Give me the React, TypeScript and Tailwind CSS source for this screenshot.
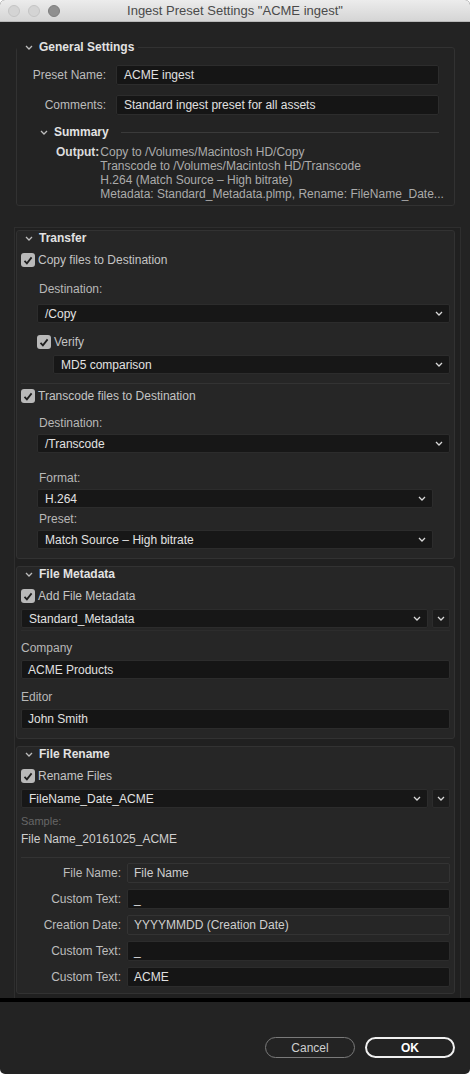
import React from 'react';

const Chevron = ({ className = '' }: { className?: string }) => (
  <svg width="8" height="5" viewBox="0 0 8 5" className={className}>
    <path d="M1 1l3 3 3-3" stroke="currentColor" strokeWidth="1.3" fill="none" />
  </svg>
);

const Check = () => (
  <span className="flex h-[14px] w-[14px] shrink-0 items-center justify-center rounded-[3px] bg-[#b9b9b9]">
    <svg width="10" height="9" viewBox="0 0 10 9">
      <path d="M1.5 4.8l2.4 2.5L8.6 1.4" stroke="#1e1e1e" strokeWidth="1.8" fill="none" />
    </svg>
  </span>
);

const CheckRow = ({ label, className = '' }: { label: string; className?: string }) => (
  <div className={`flex h-[14px] items-center gap-[3px] text-[12px] text-[#c4c4c4] ${className}`}>
    <Check />
    <span>{label}</span>
  </div>
);

const Select = ({ value, className = '' }: { value: string; className?: string }) => (
  <div
    className={`flex h-[19px] items-center justify-between rounded-[2px] border border-[#2c2c2c] bg-[#171717] pl-[7px] pr-[6px] text-[12px] text-[#e2e2e2] ${className}`}
  >
    <span>{value}</span>
    <Chevron className="text-[#d8d8d8]" />
  </div>
);

const MenuButton = () => (
  <div className="flex h-[19px] w-[18px] shrink-0 items-center justify-center rounded-[2px] border border-[#2c2c2c] bg-[#1c1c1c]">
    <Chevron className="text-[#d8d8d8]" />
  </div>
);

const Field = ({ value, className = '', dim = false }: { value: string; className?: string; dim?: boolean }) => (
  <div
    className={`flex items-center rounded-[2px] border px-[6px] text-[12px] ${
      dim ? 'border-[#333] bg-[#262626] text-[#cfcfcf]' : 'border-[#2c2c2c] bg-[#151515] text-[#e0e0e0]'
    } ${className}`}
  >
    {value}
  </div>
);

const Heading = ({ title }: { title: string }) => (
  <div className="flex h-[14px] items-center gap-[6px] pl-[8px] text-[12px] font-bold text-[#e2e2e2]">
    <Chevron className="text-[#bdbdbd]" />
    <span>{title}</span>
  </div>
);

const Label = ({ text, className = '' }: { text: string; className?: string }) => (
  <div className={`h-[14px] text-[12px] leading-[14px] text-[#b8b8b8] ${className}`}>{text}</div>
);

const Section = ({ children }: { children: React.ReactNode }) => (
  <div className="ml-[1px] w-[439px] rounded-[3px] border border-[#323232] bg-[#262626]">{children}</div>
);

const RenameRow = ({ label, value, dim }: { label: string; value: string; dim?: boolean }) => (
  <div className="flex h-[20px] items-center">
    <div className="w-[110px] pr-[6px] text-right text-[12px] text-[#bdbdbd]">{label}</div>
    <Field value={value} dim={dim} className="h-[20px] flex-1" />
  </div>
);

export default function App() {
  return (
    <div className="h-[1074px] w-[470px] bg-white font-['Liberation_Sans',Arial,sans-serif]">
      <div className="flex h-full flex-col overflow-hidden rounded-[5px] bg-[#232323]">
        {/* title bar */}
        <div className="relative flex h-[22px] shrink-0 items-center justify-center border-b border-[#b8b8b8] bg-gradient-to-b from-[#ececec] to-[#d5d5d5]">
          <div className="absolute left-[8px] top-[5px] flex gap-[8px]">
            <span className="h-[12px] w-[12px] rounded-full border border-[#c4c4c4] bg-[#d4d4d4]" />
            <span className="h-[12px] w-[12px] rounded-full border border-[#c4c4c4] bg-[#d4d4d4]" />
            <span className="h-[12px] w-[12px] rounded-full border border-[#7e7e7e] bg-[#8f8f8f]" />
          </div>
          <span className="text-[13px] text-[#4a4a4a]">Ingest Preset Settings "ACME ingest"</span>
        </div>

        {/* General settings */}
        <fieldset className="ml-[16px] mt-[18px] w-[439px] rounded-[3px] border border-[#323232] pb-[4px]">
          <legend className="pr-[4px]">
            <Heading title="General Settings" />
          </legend>
          <div className="pt-[11px]">
            <div className="flex h-[20px] items-center">
              <div className="w-[89px] text-right text-[12px] text-[#bdbdbd]">Preset Name:</div>
              <Field value="ACME ingest" className="ml-[10px] h-[20px] w-[323px] px-[7px]" />
            </div>
            <div className="mt-[10px] flex h-[20px] items-center">
              <div className="w-[89px] text-right text-[12px] text-[#bdbdbd]">Comments:</div>
              <Field value="Standard ingest preset for all assets" className="ml-[10px] h-[20px] w-[323px] px-[7px]" />
            </div>
            <div className="mt-[10px] flex h-[14px] items-center gap-[6px] pl-[23px] pr-[15px] text-[12px] font-bold text-[#e2e2e2]">
              <Chevron className="text-[#bdbdbd]" />
              <span>Summary</span>
              <span className="ml-[6px] h-px flex-1 bg-[#3a3a3a]" />
            </div>
            <div className="mt-[6px] flex gap-[1px] pl-[39px] text-[12px] leading-[14px]">
              <span className="font-bold text-[#dcdcdc]">Output:</span>
              <div className="text-[#ababab]">
                <div>Copy to /Volumes/Macintosh HD/Copy</div>
                <div>Transcode to /Volumes/Macintosh HD/Transcode</div>
                <div>H.264 (Match Source – High bitrate)</div>
                <div>Metadata: Standard_Metadata.plmp, Rename: FileName_Date...</div>
              </div>
            </div>
          </div>
        </fieldset>

        {/* scroll panel */}
        <div className="ml-[14px] mt-[21px] flex w-[447px] flex-col gap-[7px] border-x border-t border-[#2e2e2e] bg-[#202020] pb-[4px] pt-[2px]">
          <Section>
            <Heading title="Transfer" />
            <CheckRow label="Copy files to Destination" className="mt-[8px] pl-[4px]" />
            <Label text="Destination:" className="mt-[15px] pl-[22px]" />
            <Select value="/Copy" className="ml-[20px] mr-[4px] mt-[8px]" />
            <CheckRow label="Verify" className="ml-[20px] mt-[12px]" />
            <Select value="MD5 comparison" className="ml-[36px] mr-[4px] mt-[6px]" />
            <div className="mx-[4px] mt-[9px] h-px bg-[#333]" />
            <CheckRow label="Transcode files to Destination" className="mt-[5px] pl-[4px]" />
            <Label text="Destination:" className="mt-[13px] pl-[22px]" />
            <Select value="/Transcode" className="ml-[20px] mr-[4px] mt-[4px]" />
            <Label text="Format:" className="mt-[18px] pl-[22px]" />
            <Select value="H.264" className="ml-[20px] mr-[21px] mt-[4px]" />
            <Label text="Preset:" className="mt-[4px] pl-[22px]" />
            <Select value="Match Source – High bitrate" className="ml-[20px] mr-[21px] mt-[4px]" />
            <div className="h-[9px]" />
          </Section>

          <Section>
            <Heading title="File Metadata" />
            <CheckRow label="Add File Metadata" className="mt-[8px] pl-[4px]" />
            <div className="mx-[4px] mt-[6px] flex gap-[4px] border-b border-[#2c2c2c] pb-[2px]">
              <Select value="Standard_Metadata" className="flex-1" />
              <MenuButton />
            </div>
            <Label text="Company" className="mt-[10px] pl-[4px]" />
            <Field value="ACME Products" className="mx-[4px] mt-[5px] h-[19px]" />
            <Label text="Editor" className="mt-[11px] pl-[4px]" />
            <Field value="John Smith" className="mx-[4px] mt-[5px] h-[20px]" />
            <div className="h-[9px]" />
          </Section>

          <Section>
            <Heading title="File Rename" />
            <CheckRow label="Rename Files" className="mt-[8px] pl-[4px]" />
            <div className="mx-[4px] mt-[6px] flex gap-[4px]">
              <Select value="FileName_Date_ACME" className="flex-1" />
              <MenuButton />
            </div>
            <div className="mt-[7px] h-[12px] pl-[4px] text-[11px] leading-[12px] text-[#666]">Sample:</div>
            <div className="mt-[5px] h-[14px] pl-[4px] text-[12px] leading-[14px] text-[#cfcfcf]">File Name_20161025_ACME</div>
            <div className="mx-[4px] mt-[11px] h-px bg-[#333]" />
            <div className="mt-[5px] flex flex-col gap-[6px] pr-[4px]">
              <RenameRow label="File Name:" value="File Name" dim />
              <RenameRow label="Custom Text:" value="_" />
              <RenameRow label="Creation Date:" value="YYYYMMDD (Creation Date)" dim />
              <RenameRow label="Custom Text:" value="_" />
              <RenameRow label="Custom Text:" value="ACME" />
            </div>
            <div className="h-[6px]" />
          </Section>
        </div>

        <div className="h-[4px] shrink-0 bg-black" />

        {/* footer */}
        <div className="flex flex-1 justify-end gap-[10px] pr-[15px] pt-[35px]">
          <button className="flex h-[21px] w-[90px] items-center justify-center rounded-full border border-[#7a7a7a] text-[12px] text-[#cfcfcf]">
            Cancel
          </button>
          <button className="flex h-[21px] w-[90px] items-center justify-center rounded-full border-2 border-[#f0f0f0] text-[12px] font-bold text-white">
            OK
          </button>
        </div>
      </div>
    </div>
  );
}
